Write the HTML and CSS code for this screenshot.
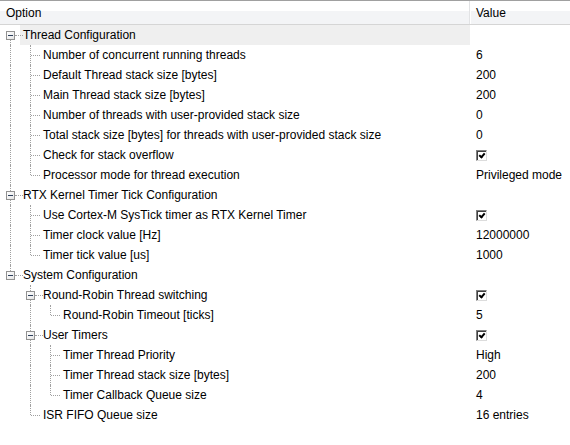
FILE: index.html
```html
<!DOCTYPE html>
<html>
<head>
<meta charset="utf-8">
<link rel="stylesheet" href="styles.css">
</head>
<body>
<div class="tree">
  <div class="header">
    <div class="h-opt">Option</div>
    <div class="h-val">Value</div>
  </div>

  <div class="row"><span class="g exp first"><i class="box"></i></span><span class="label sel">Thread Configuration</span><span class="val"></span></div>
  <div class="row"><span class="g pipe"></span><span class="g tee"></span><span class="label">Number of concurrent running threads</span><span class="val">6</span></div>
  <div class="row"><span class="g pipe"></span><span class="g tee"></span><span class="label">Default Thread stack size [bytes]</span><span class="val">200</span></div>
  <div class="row"><span class="g pipe"></span><span class="g tee"></span><span class="label">Main Thread stack size [bytes]</span><span class="val">200</span></div>
  <div class="row"><span class="g pipe"></span><span class="g tee"></span><span class="label">Number of threads with user-provided stack size</span><span class="val">0</span></div>
  <div class="row"><span class="g pipe"></span><span class="g tee"></span><span class="label">Total stack size [bytes] for threads with user-provided stack size</span><span class="val">0</span></div>
  <div class="row"><span class="g pipe"></span><span class="g tee"></span><span class="label">Check for stack overflow</span><span class="val"><i class="chk"></i></span></div>
  <div class="row"><span class="g pipe"></span><span class="g end"></span><span class="label">Processor mode for thread execution</span><span class="val">Privileged mode</span></div>

  <div class="row"><span class="g exp mid"><i class="box"></i></span><span class="label">RTX Kernel Timer Tick Configuration</span><span class="val"></span></div>
  <div class="row"><span class="g pipe"></span><span class="g tee"></span><span class="label">Use Cortex-M SysTick timer as RTX Kernel Timer</span><span class="val"><i class="chk"></i></span></div>
  <div class="row"><span class="g pipe"></span><span class="g tee"></span><span class="label">Timer clock value [Hz]</span><span class="val">12000000</span></div>
  <div class="row"><span class="g pipe"></span><span class="g end"></span><span class="label">Timer tick value [us]</span><span class="val">1000</span></div>

  <div class="row"><span class="g exp last"><i class="box"></i></span><span class="label">System Configuration</span><span class="val"></span></div>
  <div class="row"><span class="g"></span><span class="g exp mid"><i class="box"></i></span><span class="label">Round-Robin Thread switching</span><span class="val"><i class="chk"></i></span></div>
  <div class="row"><span class="g"></span><span class="g pipe"></span><span class="g end"></span><span class="label">Round-Robin Timeout [ticks]</span><span class="val">5</span></div>
  <div class="row"><span class="g"></span><span class="g exp mid"><i class="box"></i></span><span class="label">User Timers</span><span class="val"><i class="chk"></i></span></div>
  <div class="row"><span class="g"></span><span class="g pipe"></span><span class="g tee"></span><span class="label">Timer Thread Priority</span><span class="val">High</span></div>
  <div class="row"><span class="g"></span><span class="g pipe"></span><span class="g tee"></span><span class="label">Timer Thread stack size [bytes]</span><span class="val">200</span></div>
  <div class="row"><span class="g"></span><span class="g pipe"></span><span class="g end"></span><span class="label">Timer Callback Queue size</span><span class="val">4</span></div>
  <div class="row"><span class="g"></span><span class="g end"></span><span class="label">ISR FIFO Queue size</span><span class="val">16 entries</span></div>
</div>
</body>
</html>
```
FILE: styles.css
```css
html, body {
  margin: 0;
  padding: 0;
  background: #ffffff;
}
body {
  font-family: "Liberation Sans", Arial, sans-serif;
  font-size: 12px;
  color: #000000;
}
.tree {
  width: 570px;
  height: 445px;
  border-top: 1px solid #a0a0a0;
  box-sizing: border-box;
}
.header {
  display: flex;
  height: 24px;
  border-bottom: 1px solid #d5d5d5;
  box-sizing: border-box;
  background: linear-gradient(to bottom, #ffffff 0, #ffffff 10px, #f3f4f6 10px, #f3f4f6 100%);
}
.h-opt {
  width: 470px;
  box-sizing: border-box;
  padding: 5px 0 0 6px;
  border-right: 1px solid #e2e3e5;
}
.h-val {
  flex: 1;
  padding: 5px 0 0 5px;
  border-left: 1px solid #ffffff;
}
.row {
  display: flex;
  height: 20px;
  align-items: stretch;
}
.g {
  width: 20px;
  flex: none;
  position: relative;
}
.label {
  flex: 1;
  padding-left: 3px;
  line-height: 20px;
  white-space: nowrap;
}
.label.sel {
  background: #efefef;
}
.val {
  width: 94px;
  flex: none;
  padding-left: 6px;
  line-height: 20px;
  white-space: nowrap;
  display: flex;
  align-items: center;
}
/* tree lines */
.pipe::before,
.tee::before {
  content: "";
  position: absolute;
  left: 10px;
  top: 0;
  height: 20px;
  border-left: 1px dotted #a0a0a0;
}
.end::before {
  content: "";
  position: absolute;
  left: 10px;
  top: 0;
  height: 10px;
  border-left: 1px dotted #a0a0a0;
}
.tee::after,
.end::after {
  content: "";
  position: absolute;
  left: 11px;
  top: 10px;
  width: 9px;
  border-top: 1px dotted #a0a0a0;
}
.exp::after {
  content: "";
  position: absolute;
  left: 15px;
  top: 10px;
  width: 8px;
  border-top: 1px dotted #a0a0a0;
}
.exp.first::before {
  content: "";
  position: absolute;
  left: 10px;
  top: 15px;
  height: 5px;
  border-left: 1px dotted #a0a0a0;
}
.exp.mid::before {
  content: "";
  position: absolute;
  left: 10px;
  top: 0;
  height: 20px;
  border-left: 1px dotted #a0a0a0;
}
.exp.last::before {
  content: "";
  position: absolute;
  left: 10px;
  top: 0;
  height: 6px;
  border-left: 1px dotted #a0a0a0;
}
.box {
  position: absolute;
  left: 6px;
  top: 6px;
  width: 9px;
  height: 9px;
  box-sizing: border-box;
  border: 1px solid #929292;
  background: linear-gradient(135deg, #ffffff 0%, #e4e4e4 100%);
  z-index: 1;
}
.box::after {
  content: "";
  position: absolute;
  left: 1px;
  top: 3px;
  width: 5px;
  height: 1px;
  background: #2c3f5c;
}
.chk {
  display: inline-block;
  width: 11px;
  height: 11px;
  box-sizing: border-box;
  border: 1px solid #dcdcdc;
  border-top-color: #808080;
  border-left-color: #808080;
  box-shadow: inset 1px 1px 0 #404040;
  position: relative;
  background: #ffffff;
}
.chk::after {
  content: "";
  position: absolute;
  left: 3px;
  top: 1px;
  width: 2px;
  height: 4px;
  border-right: 2px solid #000;
  border-bottom: 2px solid #000;
  transform: rotate(40deg);
}
```
